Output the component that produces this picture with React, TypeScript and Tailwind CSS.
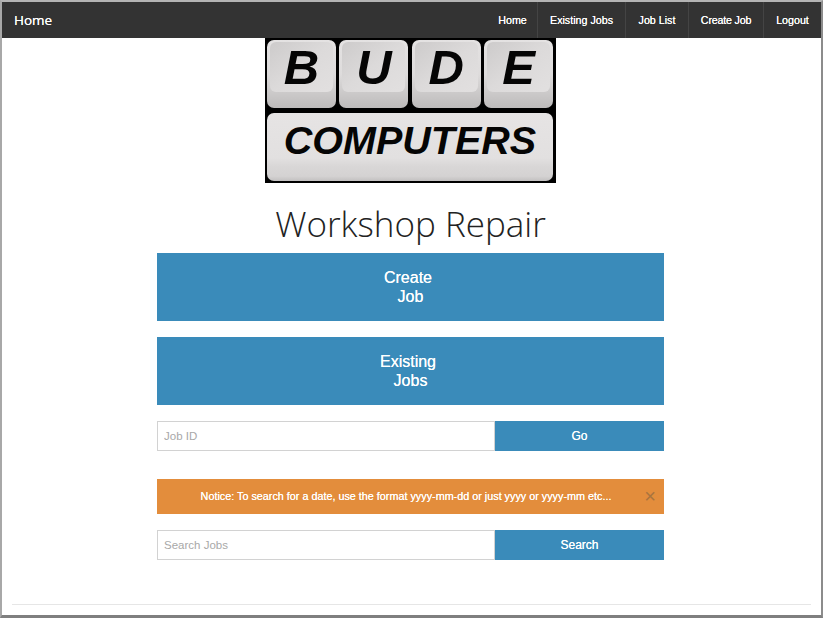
const navItems = [
  { label: "Home", cell: "w-[49px]", text: "" },
  { label: "Existing Jobs", cell: "w-[88px] border-l border-l-[#444444]", text: "" },
  { label: "Job List", cell: "w-[63px] border-l border-l-[#444444]", text: "" },
  { label: "Create Job", cell: "w-[75px] border-l border-l-[#444444]", text: "tracking-[-0.2px]" },
  { label: "Logout", cell: "w-[58px] border-l border-l-[#444444]", text: "" },
];
const sans = "font-['Liberation_Sans',Arial,sans-serif]";
const soft = "[text-shadow:0_0_0.6px_#ffffff]";

function Key({ letter }: { letter: string }) {
  return (
    <div className="w-[69px] h-[68px] rounded-[7px] pt-[2px] px-[3px] pb-[16px] bg-gradient-to-b from-[#e4e2e2] via-[#dedcdc] to-[#bdbbbb]">
      <div className="h-full rounded-[6px] bg-gradient-to-br from-[#cdcbcb] via-[#dcdada] to-[#e2e0e0] flex items-center justify-center">
        <span className={`${sans} text-[49px] leading-none font-bold italic text-[#050505]`}>{letter}</span>
      </div>
    </div>
  );
}

function Logo() {
  return (
    <div className="w-[291px] h-[145px] bg-black px-[2px] pt-[2px] flex flex-col gap-[5px]">
      <div className="flex justify-between pr-[1px]">
        {["B", "U", "D", "E"].map((l) => (
          <Key key={l} letter={l} />
        ))}
      </div>
      <div className="w-[286px] h-[68px] rounded-[7px] bg-[linear-gradient(to_bottom,#e6e4e4_0%,#e2e0e0_66%,#d9d7d7_78%,#d4d2d2_93%,#c2c0c0_100%)] flex justify-center pt-[5px]">
        <span className={`${sans} text-[39.5px] leading-[44px] font-bold italic text-[#050505]`}>COMPUTERS</span>
      </div>
    </div>
  );
}

function BigButton({ first, second }: { first: string; second: string }) {
  return (
    <button className={`${sans} ${soft} w-full h-[68px] bg-[#3a8bba] text-white text-[16px] leading-[19px] font-medium`}>
      <span className="block pr-[5px]">{first}</span>
      <span className="block">{second}</span>
    </button>
  );
}

function SearchRow({ placeholder, label }: { placeholder: string; label: string }) {
  return (
    <div className="flex h-[30px]">
      <input
        placeholder={placeholder}
        className={`${sans} w-[338px] h-full border border-[#d2d2d2] bg-white px-[6px] text-[11.5px] placeholder:text-[#a8a8a8] outline-none`}
      />
      <button className={`${sans} ${soft} flex-1 h-full bg-[#3a8bba] text-white text-[12px]`}>{label}</button>
    </div>
  );
}

export default function App() {
  return (
    <div className="w-[823px] h-[618px] overflow-hidden bg-white border-t-2 border-t-[#b4b4b4] border-l-2 border-l-[#a8a8a8] border-r-2 border-r-[#8c8c8c] border-b-[3px] border-b-[#7f7f7f] flex flex-col">
      <nav className="h-[36px] shrink-0 bg-[#333333] flex items-stretch justify-between">
        <a className={`${soft} pl-[12px] flex items-center text-[13.5px] text-white font-['Open_Sans',sans-serif]`}>Home</a>
        <ul className="flex">
          {navItems.map((item) => (
            <li
              key={item.label}
              className={`${sans} ${soft} ${item.cell} ${item.text} flex items-center justify-center text-[10.7px] text-white`}
            >
              {item.label}
            </li>
          ))}
        </ul>
      </nav>

      <div className="flex flex-col items-center pr-[2px]">
        <Logo />
        <h1 className="mt-[18px] h-[52px] text-[35px] leading-[46px] font-light text-[#222222] font-['Open_Sans',sans-serif]">
          Workshop Repair
        </h1>
      </div>

      <main className="w-[507px] ml-[155px] flex flex-col">
        <BigButton first="Create" second="Job" />
        <div className="mt-[16px]">
          <BigButton first="Existing" second="Jobs" />
        </div>
        <div className="mt-[16px]">
          <SearchRow placeholder="Job ID" label="Go" />
        </div>
        <div className={`${sans} ${soft} relative mt-[28px] h-[35px] bg-[#e38d3c] flex items-center justify-center pr-[9px] text-[10.8px] text-white`}>
          Notice: To search for a date, use the format yyyy-mm-dd or just yyyy or yyyy-mm etc...
          <span className="absolute right-[8px] top-[6px] text-[20px] leading-[22px] text-[#a9743f] [text-shadow:none]">×</span>
        </div>
        <div className="mt-[16px]">
          <SearchRow placeholder="Search Jobs" label="Search" />
        </div>
      </main>

      <hr className="mt-[44px] mx-[10px] border-t border-t-[#e6e6e6]" />
    </div>
  );
}
